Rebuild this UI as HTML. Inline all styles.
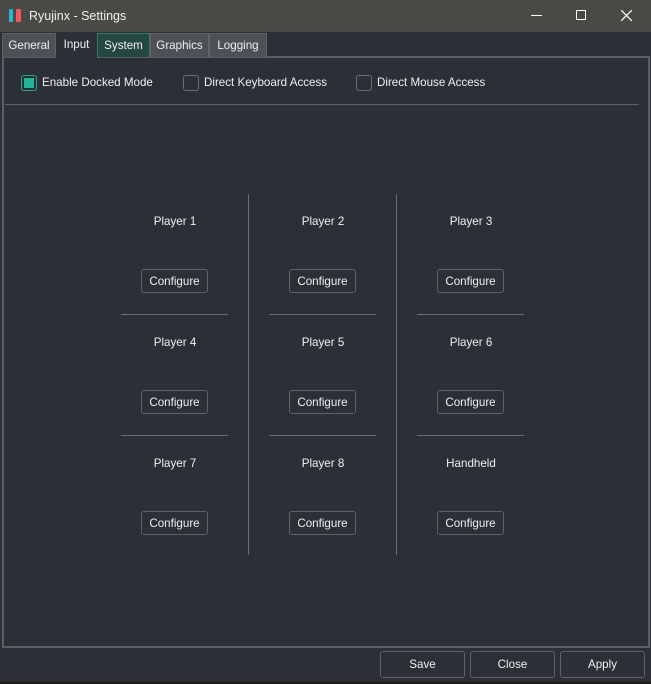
<!DOCTYPE html>
<html><head><style>
*{margin:0;padding:0;box-sizing:border-box}
body{width:651px;height:684px;background:#2b2f36;font-family:"Liberation Sans",sans-serif;font-size:11.6px;color:#f0f0f0;position:relative;overflow:hidden}
.a{position:absolute}
.title{left:0;top:0;width:651px;height:32px;background:#4a4946}
.tab{position:absolute;top:33px;height:24px;background:#4d5055;border:1px solid #5f6266;border-bottom:none;text-align:center;line-height:23px;color:#f0f0f0}
.pane{left:2px;top:56px;width:648px;height:592px;border:2px solid #5b5e62;background:#2b2f36}
.cb{position:absolute;top:75px;width:16px;height:16px;border:1px solid #6a6d71;border-radius:3px}
.lbl{position:absolute;top:75px;line-height:16px}
.p{position:absolute;width:100px;text-align:center;line-height:14px}
.btn{position:absolute;width:67px;height:24px;border:1px solid #5f6266;border-radius:3px;text-align:center;line-height:23px;background:#2b2f36}
.h{position:absolute;height:1px;width:107px;background:#6a6d71}
.v{position:absolute;width:1px;top:194px;height:361px;background:#6a6d71}
.bb{position:absolute;top:651px;width:85px;height:27px;border:1px solid #5f6266;border-radius:3px;text-align:center;line-height:26px}
</style></head><body>
<div class="a title"></div>
<div class="a" style="left:9px;top:9px;width:4px;height:13px;background:#22b8d8;border-radius:1px"></div>
<div class="a" style="left:16px;top:9px;width:5px;height:13px;background:#f05a5a;border-radius:1px"></div>
<div class="a" style="left:29px;top:8px;font-size:12.5px;line-height:16px">Ryujinx - Settings</div>
<div class="a" style="left:531px;top:15px;width:11px;height:1px;background:#fff"></div>
<div class="a" style="left:576px;top:10px;width:10px;height:10px;border:1px solid #fff"></div>
<svg class="a" style="left:621px;top:10px" width="11" height="11"><path d="M0 0L11 11M11 0L0 11" stroke="#fff" stroke-width="1.2"/></svg>
<div class="a pane"></div>
<div class="tab" style="left:2px;width:54px">General</div>
<div class="tab" style="left:56px;width:41px;background:#2b2f36;border:none;top:33px;height:25px">Input</div>
<div class="tab" style="left:97px;width:53px;background:#24473f;border-color:#3a7a6a">System</div>
<div class="tab" style="left:150px;width:59px">Graphics</div>
<div class="tab" style="left:209px;width:58px">Logging</div>
<div class="cb" style="left:21px;border:1px solid #27a38a;background:#2b2f36"><div style="position:absolute;left:2px;top:2px;width:10px;height:10px;background:#21b394"></div></div>
<div class="lbl" style="left:42px">Enable Docked Mode</div>
<div class="cb" style="left:183px"></div>
<div class="lbl" style="left:204px">Direct Keyboard Access</div>
<div class="cb" style="left:356px"></div>
<div class="lbl" style="left:377px">Direct Mouse Access</div>
<div class="a" style="left:5px;top:104px;width:634px;height:1px;background:#5f6266"></div>
<div class="v" style="left:248px"></div>
<div class="v" style="left:396px"></div>

<div class="p" style="left:125px;top:215px">Player 1</div>
<div class="p" style="left:273px;top:215px">Player 2</div>
<div class="p" style="left:421px;top:215px">Player 3</div>
<div class="btn" style="left:141px;top:269px">Configure</div>
<div class="btn" style="left:289px;top:269px">Configure</div>
<div class="btn" style="left:437px;top:269px">Configure</div>
<div class="h" style="left:121px;top:314px"></div>
<div class="h" style="left:269px;top:314px"></div>
<div class="h" style="left:417px;top:314px"></div>

<div class="p" style="left:125px;top:336px">Player 4</div>
<div class="p" style="left:273px;top:336px">Player 5</div>
<div class="p" style="left:421px;top:336px">Player 6</div>
<div class="btn" style="left:141px;top:390px">Configure</div>
<div class="btn" style="left:289px;top:390px">Configure</div>
<div class="btn" style="left:437px;top:390px">Configure</div>
<div class="h" style="left:121px;top:435px"></div>
<div class="h" style="left:269px;top:435px"></div>
<div class="h" style="left:417px;top:435px"></div>

<div class="p" style="left:125px;top:457px">Player 7</div>
<div class="p" style="left:273px;top:457px">Player 8</div>
<div class="p" style="left:421px;top:457px">Handheld</div>
<div class="btn" style="left:141px;top:511px">Configure</div>
<div class="btn" style="left:289px;top:511px">Configure</div>
<div class="btn" style="left:437px;top:511px">Configure</div>

<div class="bb" style="left:380px">Save</div>
<div class="bb" style="left:470px">Close</div>
<div class="bb" style="left:560px">Apply</div>
<div class="a" style="left:0;top:682px;width:651px;height:2px;background:#1a1a1a"></div>
</body></html>
